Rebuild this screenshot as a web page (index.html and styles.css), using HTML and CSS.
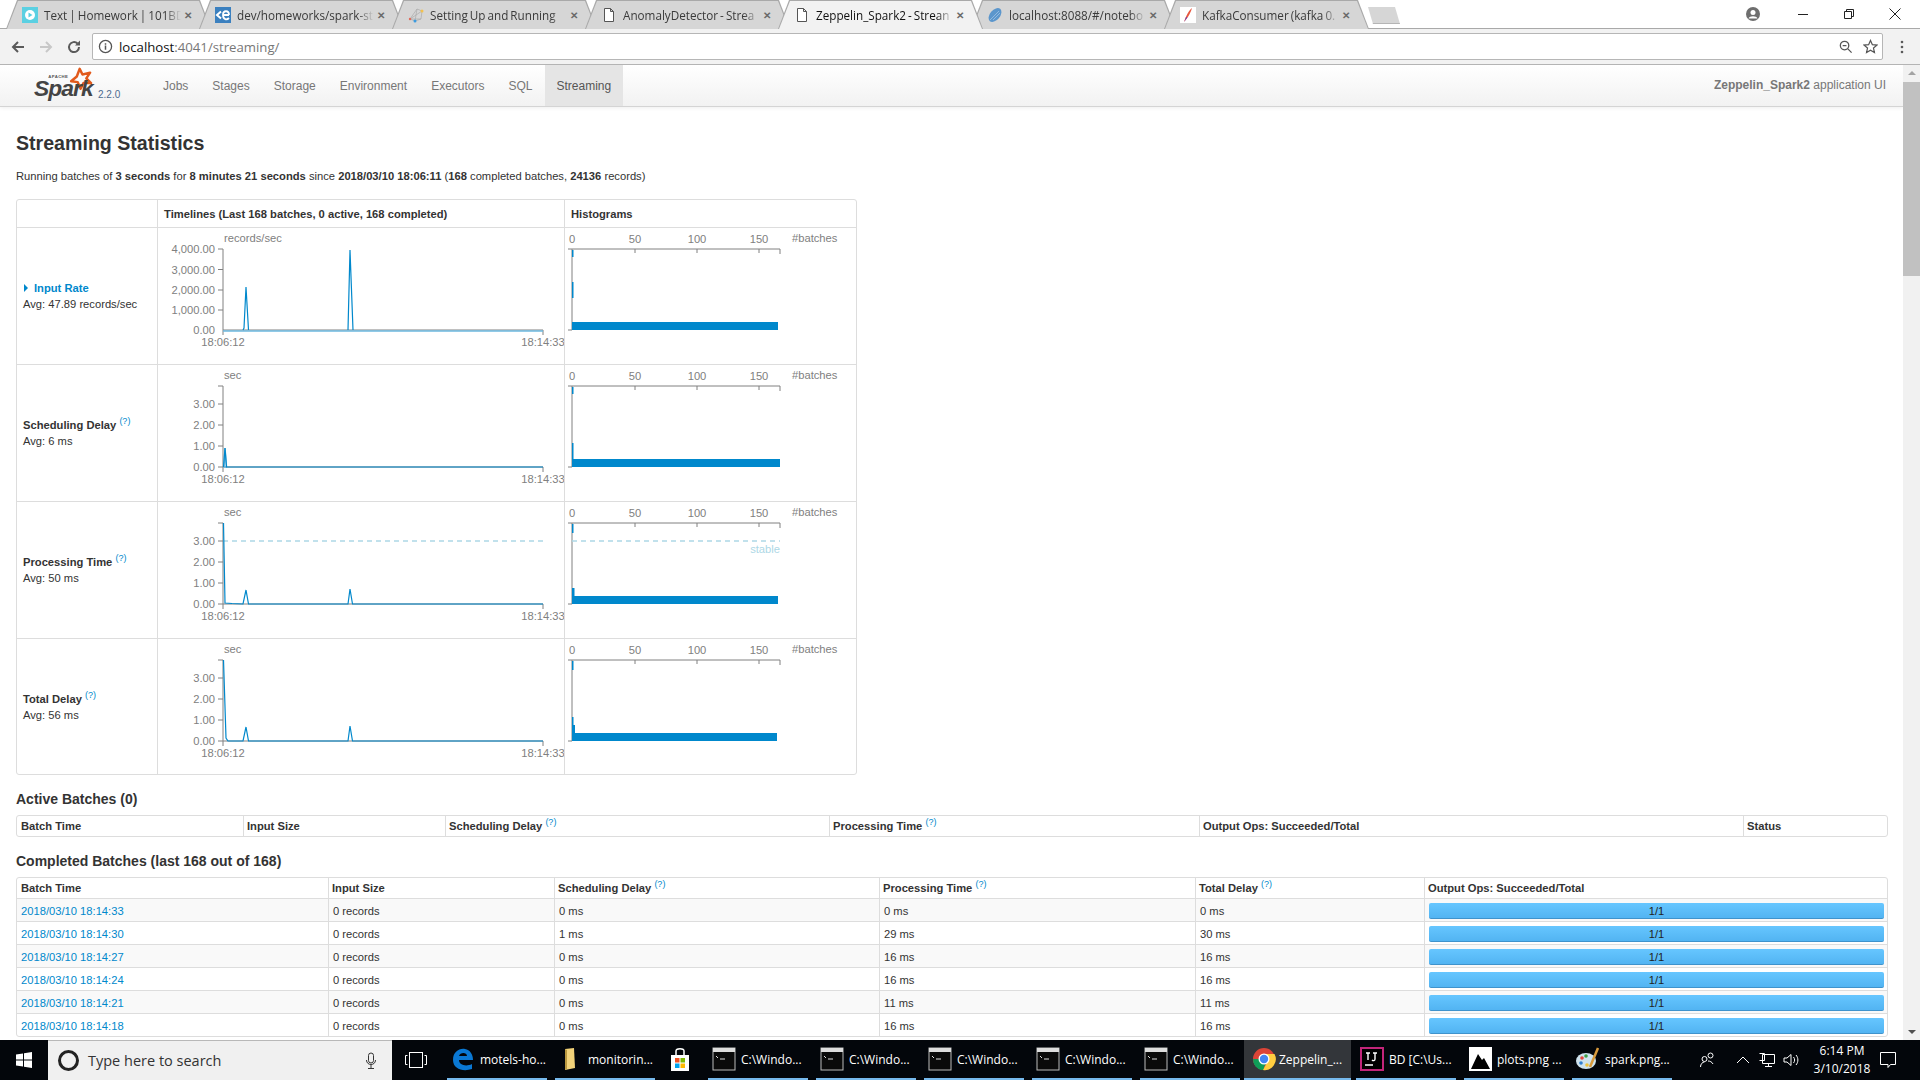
FILE: index.html
```html
<!DOCTYPE html>
<html lang="en">
<head>
    <meta charset="UTF-8">
    <title>Zeppelin_Spark2 - Streaming Statistics</title>
    <link rel="stylesheet" href="styles.css">
</head>
<body>
<svg class="defs" width="0" height="0">
    <defs>
        <symbol id="doc" viewBox="0 0 16 16"><path d="M3.5 1.5h6l3 3v10h-9z M9.5 1.5v3h3" fill="#fff" stroke="#555" stroke-width="1"/></symbol>
        <symbol id="cmd" viewBox="0 0 24 24"><rect x="1" y="1" width="22" height="22" fill="#0a0a0a" stroke="#bbb"/><rect x="1" y="1" width="22" height="4" fill="#ddd"/><path d="M4 9l2 2M8 12h5" stroke="#ddd" stroke-width="1" fill="none"/></symbol>
        <symbol id="time-axis" overflow="visible">
            <path class="axis" d="M223 102v5M543 102v5M223 102H543"/>
            <text class="tick mid" x="223" y="118">18:06:12</text>
            <text class="tick mid" x="543" y="118">18:14:33</text>
        </symbol>
        <symbol id="sec-axis" overflow="visible">
            <text class="tick" x="224" y="14">sec</text>
            <path class="axis" d="M218 21h5V102h-5M218 39h5M218 60h5M218 81h5"/>
            <text class="tick end" x="215" y="43">3.00</text>
            <text class="tick end" x="215" y="64">2.00</text>
            <text class="tick end" x="215" y="85">1.00</text>
            <text class="tick end" x="215" y="106">0.00</text>
        </symbol>
        <symbol id="hist-axis" overflow="visible">
            <text class="tick mid" x="572" y="15">0</text>
            <text class="tick mid" x="635" y="15">50</text>
            <text class="tick mid" x="697" y="15">100</text>
            <text class="tick mid" x="759" y="15">150</text>
            <text class="tick" x="792" y="14">#batches</text>
            <path class="axis" d="M568 21H780v5M635 21v4M697 21v4M759 21v4M572 21V102h-4"/>
        </symbol>
    </defs>
</svg>

<div class="tabstrip">
    <div class="tab">
        <svg class="favicon" viewBox="0 0 16 16"><rect width="16" height="16" fill="#5bd0e2"/><circle cx="8" cy="8" r="5" fill="#fff"/><path d="M6.5 5.5l4 2.5-4 2.5z" fill="#5bd0e2"/></svg>
        <span class="tab-title">Text | Homework | 101BD</span>
        <span class="tab-close">&#10005;</span>
    </div>
    <div class="tab">
        <svg class="favicon" viewBox="0 0 16 16"><rect width="16" height="16" fill="#3b80bf"/><path d="M6 4.5L2 8l4 3.500" stroke="#fff" stroke-width="2" fill="none"/><path d="M8 8h6M14 8c0-5-6-5-6 0s4 5 6 3" stroke="#fff" stroke-width="1.800" fill="none"/></svg>
        <span class="tab-title">dev/homeworks/spark-st</span>
        <span class="tab-close">&#10005;</span>
    </div>
    <div class="tab">
        <svg class="favicon" viewBox="0 0 16 16"><path d="M2 12L9 2l5 2-1 8-6 2zM2 12l11 0M9 2l-2 12M14 4L2 12" stroke="#aaa" stroke-width=".7" fill="none"/><circle cx="14" cy="4" r="1.500" fill="#f2c14e"/><circle cx="7" cy="14" r="1.500" fill="#3b9be0"/><circle cx="2" cy="12" r="1.200" fill="#e26a5a"/></svg>
        <span class="tab-title">Setting Up and Running</span>
        <span class="tab-close">&#10005;</span>
    </div>
    <div class="tab">
        <svg class="favicon"><use href="#doc"/></svg>
        <span class="tab-title">AnomalyDetector - Strea</span>
        <span class="tab-close">&#10005;</span>
    </div>
    <div class="tab tab-active">
        <svg class="favicon"><use href="#doc"/></svg>
        <span class="tab-title">Zeppelin_Spark2 - Strean</span>
        <span class="tab-close">&#10005;</span>
    </div>
    <div class="tab">
        <svg class="favicon" viewBox="0 0 16 16"><ellipse cx="8" cy="8" rx="8" ry="5" transform="rotate(-50 8 8)" fill="#5b96cc"/><path d="M3 13L12 4M6 13L13 6" stroke="#a9c9e6" stroke-width=".7"/></svg>
        <span class="tab-title">localhost:8088/#/notebo</span>
        <span class="tab-close">&#10005;</span>
    </div>
    <div class="tab">
        <svg class="favicon" viewBox="0 0 16 16"><rect width="16" height="16" fill="#fff"/><path d="M12 1C9 3 6 9 4 15 7 11 10 8 12 1z" fill="#e8573f"/><path d="M6 10C5.500 12 4.500 14 4 15 5.500 13.500 6.500 12 7.500 10z" fill="#7b3fa0"/></svg>
        <span class="tab-title">KafkaConsumer (kafka 0.</span>
        <span class="tab-close">&#10005;</span>
    </div>
    <div class="newtab"></div>
    <div class="window-btns">
        <svg class="win-icon account" viewBox="0 0 16 16"><circle cx="8" cy="8" r="7" fill="#6e6e6e"/><circle cx="8" cy="6.500" r="2.500" fill="#fff"/><path d="M3.500 12.500c1-3 8-3 9 0" fill="#fff"/></svg>
        <svg class="win-icon" viewBox="0 0 16 16"><path d="M3 8.500h10" stroke="#222"/></svg>
        <svg class="win-icon" viewBox="0 0 16 16"><path d="M3.500 5.500h7v7h-7zM5.500 5.500v-2h7v7h-2" stroke="#222" fill="none"/></svg>
        <svg class="win-icon" viewBox="0 0 16 16"><path d="M2.500 2.500l11 11M13.500 2.500l-11 11" stroke="#222" fill="none"/></svg>
    </div>
</div>

<div class="toolbar">
    <svg class="tool-icon" viewBox="0 0 16 16"><path d="M14 8H3M8 3L3 8l5 5" stroke="#5a5a5a" stroke-width="2" fill="none"/></svg>
    <svg class="tool-icon" viewBox="0 0 16 16"><path d="M2 8h11M8 3l5 5-5 5" stroke="#c8c8c8" stroke-width="2" fill="none"/></svg>
    <svg class="tool-icon" viewBox="0 0 16 16"><path d="M13 8a5 5 0 1 1-1.500-3.500" stroke="#5a5a5a" stroke-width="2" fill="none"/><path d="M14 1.500v5h-5z" fill="#5a5a5a"/></svg>
    <div class="urlbar">
        <svg class="url-info" viewBox="0 0 16 16"><circle cx="8" cy="8" r="6.500" stroke="#555" stroke-width="1.400" fill="none"/><path d="M8 7v4.500M8 4.500v1.500" stroke="#555" stroke-width="1.600"/></svg>
        <span class="url-text"><span class="url-host">localhost</span>:4041/streaming/</span>
        <svg class="url-action" viewBox="0 0 16 16"><circle cx="7" cy="7" r="4.500" stroke="#555" stroke-width="1.400" fill="none"/><path d="M10.500 10.500l4 4M5 7h4" stroke="#555" stroke-width="1.400"/></svg>
        <svg class="url-action" viewBox="0 0 16 16"><path d="M8 1.500l2 4.500 4.800.5-3.600 3.200 1 4.800L8 12l-4.200 2.500 1-4.800L1.200 6.500 6 6z" stroke="#555" stroke-width="1.300" fill="none"/></svg>
    </div>
    <svg class="menu-dots" viewBox="0 0 4 16"><circle cx="2" cy="3" r="1.300" fill="#5a5a5a"/><circle cx="2" cy="8" r="1.300" fill="#5a5a5a"/><circle cx="2" cy="13" r="1.300" fill="#5a5a5a"/></svg>
</div>

<div class="viewport">
    <div class="page">
        <div class="navbar">
            <div class="brand">
                <svg class="logo" viewBox="0 0 70 40">
                    <path d="M52 3l3 6 8-2-4 6 5 5-8 0-3 6-3-7-7-1 6-5z" fill="none" stroke="#e25a1c" stroke-width="2.600" stroke-linejoin="round"/>
                    <text class="logo-apache" x="19" y="13">APACHE</text>
                    <text class="logo-spark" x="4" y="32">Spark</text>
                </svg>
                <span class="version">2.2.0</span>
            </div>
            <a class="nav-item">Jobs</a>
            <a class="nav-item">Stages</a>
            <a class="nav-item">Storage</a>
            <a class="nav-item">Environment</a>
            <a class="nav-item">Executors</a>
            <a class="nav-item">SQL</a>
            <a class="nav-item nav-active">Streaming</a>
            <span class="app-name"><b>Zeppelin_Spark2</b> application UI</span>
        </div>

        <div class="content">
            <h3>Streaming Statistics</h3>
            <p class="summary">Running batches of <b>3 seconds</b> for <b>8 minutes 21 seconds</b> since <b>2018/03/10 18:06:11</b> (<b>168</b> completed batches, <b>24136</b> records)</p>

            <table class="grid stats">
                <colgroup><col><col><col></colgroup>
                <thead>
                <tr><th></th><th>Timelines (Last 168 batches, 0 active, 168 completed)</th><th>Histograms</th></tr>
                </thead>
                <tbody>
                <tr>
                    <td class="stat-name">
                        <div class="stat-title stat-link"><span class="arrow"></span>Input Rate</div>
                        <div>Avg: 47.89 records/sec</div>
                    </td>
                    <td class="chart">
                        <svg viewBox="158 0 406 136">
                            <use href="#time-axis"/>
                            <text class="tick" x="224" y="14">records/sec</text>
                            <path class="axis" d="M218 21h5V102M218 41.500h5M218 62h5M218 82h5"/>
                            <text class="tick end" x="215" y="25">4,000.00</text>
                            <text class="tick end" x="215" y="45.500">3,000.00</text>
                            <text class="tick end" x="215" y="66">2,000.00</text>
                            <text class="tick end" x="215" y="86">1,000.00</text>
                            <text class="tick end" x="215" y="106">0.00</text>
                            <path class="soft" d="M223 103H543"/>
                            <path class="line" d="M243 102L244 100L246 59L248.500 102M348 102L350 22L353 102"/>
                        </svg>
                    </td>
                    <td class="chart">
                        <svg viewBox="565 0 291 136">
                            <use href="#hist-axis"/>
                            <rect class="bar" x="572" y="22" width="1.500" height="7"/>
                            <rect class="bar" x="572" y="54" width="1.500" height="16"/>
                            <rect class="bar" x="572" y="94" width="206" height="8"/>
                        </svg>
                    </td>
                </tr>
                <tr>
                    <td class="stat-name">
                        <div class="stat-title">Scheduling Delay <sup class="help">(?)</sup></div>
                        <div>Avg: 6 ms</div>
                    </td>
                    <td class="chart">
                        <svg viewBox="158 0 406 136">
                            <use href="#time-axis"/>
                            <use href="#sec-axis"/>
                            <path class="soft" d="M224 102L225 83L226.500 102z"/>
                            <path class="line" d="M223.500 102L225 83L226.500 102H543"/>
                        </svg>
                    </td>
                    <td class="chart">
                        <svg viewBox="565 0 291 136">
                            <use href="#hist-axis"/>
                            <rect class="bar" x="572" y="22" width="1.500" height="7"/>
                            <rect class="bar" x="572" y="78" width="1.500" height="16"/>
                            <rect class="bar" x="572" y="94" width="208" height="8"/>
                        </svg>
                    </td>
                </tr>
                <tr>
                    <td class="stat-name">
                        <div class="stat-title">Processing Time <sup class="help">(?)</sup></div>
                        <div>Avg: 50 ms</div>
                    </td>
                    <td class="chart">
                        <svg viewBox="158 0 406 136">
                            <use href="#time-axis"/>
                            <use href="#sec-axis"/>
                            <path class="stable" d="M223 39H543"/>
                            <path class="line" d="M223.500 21L225 101L232 101.500L243 102L246 88L248.500 102H348L350 87L352.500 102H543"/>
                        </svg>
                    </td>
                    <td class="chart">
                        <svg viewBox="565 0 291 136">
                            <use href="#hist-axis"/>
                            <path class="stable" d="M572 39H780"/>
                            <text class="stable-label" x="780" y="51">stable</text>
                            <rect class="bar" x="572" y="22" width="1.500" height="9"/>
                            <rect class="bar" x="572" y="86" width="2.500" height="16"/>
                            <rect class="bar" x="572" y="94" width="206" height="8"/>
                        </svg>
                    </td>
                </tr>
                <tr>
                    <td class="stat-name">
                        <div class="stat-title">Total Delay <sup class="help">(?)</sup></div>
                        <div>Avg: 56 ms</div>
                    </td>
                    <td class="chart">
                        <svg viewBox="158 0 406 135">
                            <use href="#time-axis"/>
                            <use href="#sec-axis"/>
                            <path class="line" d="M223.500 21L226 99L228 102L243 102L246 88L248.500 102H348L350 87L352.500 102H543"/>
                        </svg>
                    </td>
                    <td class="chart">
                        <svg viewBox="565 0 291 135">
                            <use href="#hist-axis"/>
                            <rect class="bar" x="572" y="22" width="1.500" height="9"/>
                            <rect class="bar" x="572" y="78" width="1.500" height="16"/>
                            <rect class="bar" x="572" y="86" width="3" height="16"/>
                            <rect class="bar" x="572" y="94" width="205" height="8"/>
                        </svg>
                    </td>
                </tr>
                </tbody>
            </table>

            <h4>Active Batches (0)</h4>
            <table class="grid batches active-batches">
                <colgroup><col><col><col><col><col><col></colgroup>
                <thead>
                <tr>
                    <th>Batch Time</th>
                    <th>Input Size</th>
                    <th>Scheduling Delay <sup class="help">(?)</sup></th>
                    <th>Processing Time <sup class="help">(?)</sup></th>
                    <th>Output Ops: Succeeded/Total</th>
                    <th>Status</th>
                </tr>
                </thead>
            </table>

            <h4>Completed Batches (last 168 out of 168)</h4>
            <table class="grid batches completed-batches">
                <colgroup><col><col><col><col><col><col></colgroup>
                <thead>
                <tr>
                    <th>Batch Time</th>
                    <th>Input Size</th>
                    <th>Scheduling Delay <sup class="help">(?)</sup></th>
                    <th>Processing Time <sup class="help">(?)</sup></th>
                    <th>Total Delay <sup class="help">(?)</sup></th>
                    <th>Output Ops: Succeeded/Total</th>
                </tr>
                </thead>
                <tbody>
                <tr><td><a>2018/03/10 18:14:33</a></td><td>0 records</td><td>0 ms</td><td>0 ms</td><td>0 ms</td><td class="ops"><div class="progress">1/1</div></td></tr>
                <tr><td><a>2018/03/10 18:14:30</a></td><td>0 records</td><td>1 ms</td><td>29 ms</td><td>30 ms</td><td class="ops"><div class="progress">1/1</div></td></tr>
                <tr><td><a>2018/03/10 18:14:27</a></td><td>0 records</td><td>0 ms</td><td>16 ms</td><td>16 ms</td><td class="ops"><div class="progress">1/1</div></td></tr>
                <tr><td><a>2018/03/10 18:14:24</a></td><td>0 records</td><td>0 ms</td><td>16 ms</td><td>16 ms</td><td class="ops"><div class="progress">1/1</div></td></tr>
                <tr><td><a>2018/03/10 18:14:21</a></td><td>0 records</td><td>0 ms</td><td>11 ms</td><td>11 ms</td><td class="ops"><div class="progress">1/1</div></td></tr>
                <tr><td><a>2018/03/10 18:14:18</a></td><td>0 records</td><td>0 ms</td><td>16 ms</td><td>16 ms</td><td class="ops"><div class="progress">1/1</div></td></tr>
                </tbody>
            </table>
        </div>
    </div>
    <div class="scrollbar">
        <span class="scroll-up"></span>
        <div class="scroll-thumb"></div>
        <span class="scroll-down"></span>
    </div>
</div>

<div class="taskbar">
    <div class="start">
        <svg viewBox="0 0 16 16"><path d="M0 2.500L7 1.500V7.500H0zM8 1.300L16 0V7.500H8zM0 8.500H7V14.500L0 13.500zM8 8.500H16V16L8 14.700z" fill="#fff"/></svg>
    </div>
    <div class="search">
        <span class="cortana"></span>
        <span class="search-text">Type here to search</span>
        <svg class="mic" viewBox="0 0 12 18"><rect x="3.500" y="1" width="5" height="10" rx="2.500" fill="none" stroke="#333"/><path d="M1.500 8c0 6 9 6 9 0M6 13v3M3 16.500h6" fill="none" stroke="#333"/></svg>
    </div>
    <svg class="taskview" viewBox="0 0 22 18"><rect x="4.500" y="1.500" width="13" height="15" fill="none" stroke="#fff"/><path d="M2.500 4.500H.5v9h2M19.500 4.500h2v9h-2" fill="none" stroke="#fff"/></svg>
    <div class="task running">
        <svg class="task-icon" viewBox="0 0 24 24"><path d="M22 13H8c0 5 7 7 13 4v5c-9 3-19 0-19-9C2 5 8 1 14 2c5 1 8 5 8 11zM8 9h8c0-4-7-4-8 0z" fill="#0a78d4"/></svg>
        <span>motels-ho...</span>
    </div>
    <div class="task running">
        <svg class="task-icon" viewBox="0 0 24 24"><path d="M6 2l9-1 1 20-10 2z" fill="#f2d27a"/><path d="M6 2v21l2-1V3z" fill="#b9973f"/></svg>
        <span>monitorin...</span>
    </div>
    <div class="store">
        <svg class="task-icon" viewBox="0 0 24 24"><path d="M3 7h18v16H3z" fill="#fff"/><path d="M8 7V3c0-3 8-3 8 0v4" fill="none" stroke="#fff" stroke-width="1.500"/><rect x="7" y="10" width="4.500" height="4.500" fill="#f25022"/><rect x="12.500" y="10" width="4.500" height="4.500" fill="#7fba00"/><rect x="7" y="15.500" width="4.500" height="4.500" fill="#00a4ef"/><rect x="12.500" y="15.500" width="4.500" height="4.500" fill="#ffb900"/></svg>
    </div>
    <div class="task running"><svg class="task-icon"><use href="#cmd"/></svg><span>C:\Windo...</span></div>
    <div class="task running"><svg class="task-icon"><use href="#cmd"/></svg><span>C:\Windo...</span></div>
    <div class="task running"><svg class="task-icon"><use href="#cmd"/></svg><span>C:\Windo...</span></div>
    <div class="task running"><svg class="task-icon"><use href="#cmd"/></svg><span>C:\Windo...</span></div>
    <div class="task running"><svg class="task-icon"><use href="#cmd"/></svg><span>C:\Windo...</span></div>
    <div class="task running task-current">
        <svg class="task-icon" viewBox="0 0 24 24"><circle cx="12" cy="12" r="11" fill="#db4437"/><path d="M12 12L1.500 15A11 11 0 0 0 12 23z" fill="#0f9d58"/><path d="M12 12L1 12A11 11 0 0 0 10 23L17 12z" fill="#0f9d58"/><path d="M12 7H22.500A11 11 0 0 1 11 23L17 12z" fill="#ffcd40"/><circle cx="12" cy="12" r="5.500" fill="#fff"/><circle cx="12" cy="12" r="4.200" fill="#4285f4"/></svg>
        <span>Zeppelin_...</span>
    </div>
    <div class="task running">
        <svg class="task-icon" viewBox="0 0 24 24"><rect x="1" y="1" width="22" height="22" fill="#000" stroke="#c2257a" stroke-width="2"/><path d="M5 18h8M6 6h4M8 6v7M13 6h4M15 6v6c0 2-2 2-3 1" stroke="#fff" stroke-width="1.400" fill="none"/></svg>
        <span>BD [C:\Us...</span>
    </div>
    <div class="task running">
        <svg class="task-icon" viewBox="0 0 24 24"><rect x="1" y="0" width="23" height="24" fill="#fff"/><path d="M3 22L10 7l4 6 2-2 6 11z" fill="#000"/></svg>
        <span>plots.png ...</span>
    </div>
    <div class="task running">
        <svg class="task-icon" viewBox="0 0 24 24"><ellipse cx="10" cy="14" rx="10" ry="8" fill="#cfe3ee"/><circle cx="6" cy="11" r="1.800" fill="#e2453c"/><circle cx="10" cy="9" r="1.800" fill="#3f9d46"/><circle cx="5" cy="16" r="1.800" fill="#2f7fd0"/><circle cx="11" cy="18" r="1.800" fill="#efc23a"/><path d="M22 1L14 20" stroke="#d99a3b" stroke-width="2.500"/></svg>
        <span>spark.png...</span>
    </div>
    <div class="tray">
        <svg class="tray-icon" viewBox="0 0 18 18"><circle cx="11.500" cy="4.500" r="2.500" fill="none" stroke="#fff"/><circle cx="5.500" cy="8" r="2.500" fill="none" stroke="#fff"/><path d="M1.500 16c0-3 2-5 4-5M9 10c2 0 4 1 5 3" fill="none" stroke="#fff"/></svg>
        <svg class="tray-icon tray-chevron" viewBox="0 0 18 18"><path d="M3 12l6-6 6 6" fill="none" stroke="#fff"/></svg>
        <svg class="tray-icon" viewBox="0 0 18 18"><path d="M4.500 3.500h12v9h-12zM7 15.500h7M10.500 12.500v3M1.500 2.500h5v7h-5" fill="none" stroke="#fff"/></svg>
        <svg class="tray-icon" viewBox="0 0 18 18"><path d="M2 7h3l4-3.500v11L5 11H2zM11.500 6c1.500 2 1.500 4 0 6M14 4c2.500 3 2.500 7 0 10" fill="none" stroke="#fff"/></svg>
        <div class="clock"><div>6:14 PM</div><div>3/10/2018</div></div>
        <svg class="tray-icon notify" viewBox="0 0 20 20"><path d="M2.500 2.500h15v12h-5l-2.500 3v-3h-7.500z" fill="none" stroke="#fff"/></svg>
    </div>
</div>
</body>
</html>
```

FILE: styles.css
```css
* {
    box-sizing: border-box;
}

html, body {
    height: 100%;
}

body {
    display: flex;
    flex-direction: column;
    margin: 0;
    overflow: hidden;
    background: #ffffff;
    color: #333333;
    font-family: "Liberation Sans", Arial, sans-serif;
    font-size: 11.2px;
}

.defs {
    position: absolute;
}

/* browser chrome */
.tabstrip {
    display: flex;
    flex: none;
    height: 28px;
    padding-left: 6px;
    background: #ffffff;
}

.tab {
    position: relative;
    display: flex;
    flex: none;
    align-items: center;
    width: 205px;
    height: 29px;
    margin-right: -12px;
    padding: 0 16px 0 16px;
    background: #a9a9a9;
    clip-path: polygon(0 100%, 11px 0, 194px 0, 100% 100%);
    font-family: "Open Sans", "Noto Sans", sans-serif;
    font-size: 11.7px;
}

.tab::before {
    content: "";
    position: absolute;
    inset: 1px 1px 0;
    background: #d6d6d6;
    clip-path: polygon(0 100%, 11px 0, 192px 0, 100% 100%);
}

.tab-active {
    z-index: 1;
    background: #a9a9a9;
}

.tab-active::before {
    background: #f2f2f2;
    bottom: 0;
}

.favicon, .tab-title, .tab-close {
    position: relative;
}

.favicon {
    flex: none;
    width: 16px;
    height: 16px;
}

.tab-title {
    flex: none;
    width: 137px;
    margin-left: 6px;
    overflow: hidden;
    white-space: nowrap;
    word-spacing: -1px;
    color: #3a3a3a;
    -webkit-mask-image: linear-gradient(to right, #000 88%, transparent);
    mask-image: linear-gradient(to right, #000 88%, transparent);
}

.tab-active .tab-title {
    color: #111111;
}

.tab-close {
    margin-left: 3px;
    color: #6a6a6a;
    font-size: 10px;
    font-weight: bold;
}

.newtab {
    flex: none;
    width: 32px;
    height: 17px;
    margin: 7px 0 0 11px;
    background: #d6d6d6;
    border-bottom: 1px solid #b5b5b5;
    clip-path: polygon(0 0, 27px 0, 100% 100%, 5px 100%);
}

.window-btns {
    display: flex;
    flex: 1;
    align-items: flex-start;
    justify-content: flex-end;
    gap: 30px;
    padding: 6px 17px 0 0;
}

.win-icon {
    width: 16px;
    height: 16px;
}

.account {
    margin-right: 4px;
}

.toolbar {
    display: flex;
    flex: none;
    align-items: center;
    height: 37px;
    padding: 0 16px 0 10px;
    background: #f2f2f2;
    border-top: 1px solid #a9a9a9;
    border-bottom: 1px solid #b4b4b4;
}

.tool-icon {
    width: 16px;
    height: 16px;
    margin-right: 12px;
}

.urlbar {
    display: flex;
    flex: 1;
    align-items: center;
    height: 27px;
    margin-left: -2px;
    padding: 0 4px 0 5px;
    background: #ffffff;
    border: 1px solid #b6b6b6;
    border-radius: 2px;
}

.url-info {
    flex: none;
    width: 15px;
    height: 15px;
    margin-right: 6px;
}

.url-text {
    flex: 1;
    color: #777777;
    font-family: "Open Sans", "Noto Sans", sans-serif;
    font-size: 13.2px;
}

.url-host {
    color: #111111;
}

.url-action {
    width: 15px;
    height: 15px;
    margin-left: 10px;
}

.menu-dots {
    width: 4px;
    height: 16px;
    margin-left: 17px;
}

/* spark page */
.viewport {
    display: flex;
    flex: 1;
    min-height: 0;
}

.page {
    flex: 1;
    min-width: 0;
    overflow: hidden;
}

.navbar {
    display: flex;
    align-items: stretch;
    height: 42px;
    background: linear-gradient(#ffffff, #f2f2f2);
    border-bottom: 1px solid #d4d4d4;
    box-shadow: 0 1px 4px rgba(0, 0, 0, 0.07);
    font-size: 12px;
}

.brand {
    display: flex;
    flex: none;
    align-items: flex-end;
    width: 151px;
    padding: 0 0 6px 29px;
}

.logo {
    flex: none;
    width: 69px;
    height: 38px;
    margin-bottom: -4px;
}

.logo-apache {
    fill: #555555;
    font-size: 4.500px;
    font-weight: bold;
    letter-spacing: 0.4px;
}

.logo-spark {
    fill: #444444;
    font-size: 24px;
    font-style: italic;
    font-weight: bold;
    letter-spacing: -1px;
}

.version {
    color: #4d6b8f;
    font-size: 10px;
}

.nav-item {
    display: flex;
    align-items: center;
    padding: 0 12px;
    color: #777777;
}

.nav-active {
    background: #e5e5e5;
    color: #555555;
}

.app-name {
    margin-left: auto;
    padding: 13px 17px 0 0;
    color: #777777;
}

.content {
    padding: 0 17px 0 16px;
}

h3 {
    margin: 23px 0 0;
    color: #333333;
    font-size: 19.6px;
    line-height: 26px;
}

.summary {
    margin: 12px 0 15px;
    line-height: 16px;
}

h4 {
    margin: 15px 0 7px;
    color: #333333;
    font-size: 14px;
    line-height: 18px;
}

.grid {
    width: 100%;
    border-collapse: separate;
    border-spacing: 0;
    table-layout: fixed;
    border: 1px solid #dddddd;
    border-radius: 3px;
}

.grid th, .grid td {
    padding: 0 0 0 4px;
    border-left: 1px solid #dddddd;
    border-top: 1px solid #dddddd;
    text-align: left;
    white-space: nowrap;
}

.grid th {
    height: 20px;
    border-top: 0;
}

.grid th:first-child, .grid td:first-child {
    border-left: 0;
}

.stats {
    width: 839px;
}

.stats col:nth-child(1) { width: 140px; }
.stats col:nth-child(2) { width: 407px; }
.stats col:nth-child(3) { width: 292px; }

.stats th {
    height: 27px;
    padding-left: 6px;
}

.stats td {
    height: 137px;
}

.stats tr:last-child td {
    height: 136px;
}

.stat-name {
    line-height: 16px;
    padding-left: 6px !important;
}

.stat-title {
    font-weight: bold;
    margin-bottom: 0;
}

.stat-link {
    color: #0088cc;
}

.arrow {
    display: inline-block;
    width: 0;
    height: 0;
    margin: 0 6px 0 1px;
    border-left: 4px solid #0088cc;
    border-top: 4px solid transparent;
    border-bottom: 4px solid transparent;
}

.help {
    color: #0088cc;
    font-size: 9px;
    font-weight: normal;
    line-height: 0;
}

.chart {
    padding: 0 !important;
}

.chart svg {
    display: block;
    width: 100%;
    height: 136px;
}

.stats tr:last-child .chart svg {
    height: 135px;
}

.tick {
    fill: #808080;
    font-size: 11.200px;
}

.mid {
    text-anchor: middle;
}

.end {
    text-anchor: end;
}

.axis {
    fill: none;
    stroke: #808080;
}

.line {
    fill: none;
    stroke: #0088cc;
    stroke-width: 1.200;
}

.soft {
    fill: none;
    stroke: #6cb8df;
    stroke-width: 1.500;
}

.bar {
    fill: #0088cc;
}

.stable {
    fill: none;
    stroke: #add8e6;
    stroke-dasharray: 5 4;
    stroke-width: 1.500;
}

.stable-label {
    fill: #add8e6;
    font-size: 11.200px;
    text-anchor: end;
}

.active-batches col:nth-child(1) { width: 226px; }
.active-batches col:nth-child(2) { width: 202px; }
.active-batches col:nth-child(3) { width: 384px; }
.active-batches col:nth-child(4) { width: 370px; }
.active-batches col:nth-child(5) { width: 544px; }
.active-batches col:nth-child(6) { width: 144px; }

.completed-batches col:nth-child(1) { width: 311px; }
.completed-batches col:nth-child(2) { width: 226px; }
.completed-batches col:nth-child(3) { width: 325px; }
.completed-batches col:nth-child(4) { width: 316px; }
.completed-batches col:nth-child(5) { width: 229px; }
.completed-batches col:nth-child(6) { width: 463px; }

.batches th {
    padding-left: 3px;
}

.batches th:first-child {
    padding-left: 4px;
}

.batches td {
    height: 23px;
    padding-top: 1px;
}

.batches tbody tr:nth-child(odd) td {
    background: #f9f9f9;
}

.batches a {
    color: #0088cc;
}

.ops {
    padding-right: 3px !important;
}

.progress {
    height: 16px;
    background: linear-gradient(#66c6ff, #52b4f2);
    border-bottom: 1px solid #3f93cc;
    border-radius: 2px;
    color: #222222;
    line-height: 16px;
    text-align: center;
}

/* scrollbar */
.scrollbar {
    position: relative;
    flex: none;
    width: 17px;
    padding-top: 17px;
    background: #f1f1f1;
}

.scroll-thumb {
    height: 194px;
    background: #c1c1c1;
}

.scroll-up, .scroll-down {
    position: absolute;
    left: 5px;
    width: 0;
    height: 0;
    border-left: 4px solid transparent;
    border-right: 4px solid transparent;
}

.scroll-up {
    top: 6px;
    border-bottom: 4px solid #a3a3a3;
}

.scroll-down {
    bottom: 6px;
    border-top: 4px solid #505050;
}

/* windows taskbar */
.taskbar {
    display: flex;
    flex: none;
    align-items: stretch;
    height: 40px;
    background: #03060b;
    color: #ffffff;
    font-family: "Open Sans", "Noto Sans", sans-serif;
    font-size: 12px;
}

.start {
    display: flex;
    flex: none;
    align-items: center;
    justify-content: center;
    width: 48px;
}

.start svg {
    width: 16px;
    height: 16px;
}

.search {
    display: flex;
    flex: none;
    align-items: center;
    width: 344px;
    padding: 0 15px 0 10px;
    background: #f0f0f0;
    border-top: 1px solid #b8b8b8;
    color: #333333;
    font-size: 14.500px;
}

.cortana {
    flex: none;
    width: 21px;
    height: 21px;
    margin-right: 9px;
    border: 3px solid #222222;
    border-radius: 50%;
}

.search-text {
    flex: 1;
}

.mic {
    width: 12px;
    height: 18px;
}

.taskview {
    flex: none;
    align-self: center;
    width: 22px;
    height: 18px;
    margin: 0 20px 0 13px;
}

.task {
    display: flex;
    flex: none;
    align-items: center;
    width: 100px;
    margin-right: 8px;
    padding-left: 4px;
    white-space: nowrap;
}

.task span {
    margin-left: 5px;
}

.running {
    border-bottom: 2px solid #76b9ed;
}

.task-current {
    width: 107px;
    margin-left: -4px;
    margin-right: 5px;
    padding-left: 8px;
    background: #33363a;
}

.task-current span {
    margin-left: 3px;
}

.task-icon {
    flex: none;
    width: 24px;
    height: 24px;
}

.store {
    display: flex;
    flex: none;
    align-items: center;
    width: 45px;
    padding-left: 5px;
}

.tray {
    display: flex;
    flex: 1;
    align-items: center;
    padding-left: 19px;
}

.tray-icon {
    flex: none;
    width: 18px;
    height: 18px;
    margin-right: 6px;
}

.tray-chevron {
    margin-left: 11px;
}

.clock {
    width: 62px;
    margin-left: 5px;
    font-size: 12px;
    line-height: 18px;
    text-align: center;
}

.notify {
    width: 20px;
    height: 20px;
    margin: 0 0 0 5px;
}
```
